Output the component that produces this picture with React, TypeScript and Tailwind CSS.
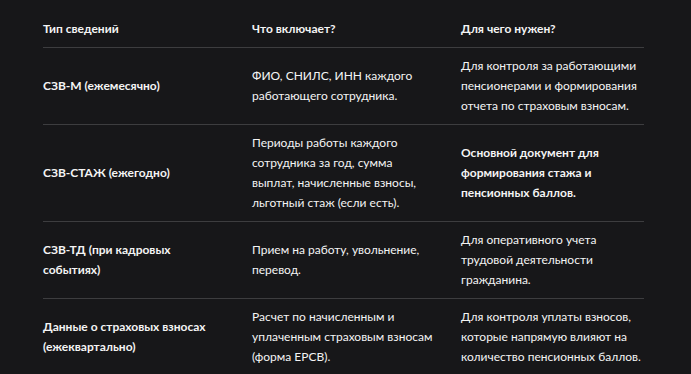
const rows = [
  {
    type: "СЗВ-М (ежемесячно)",
    what: "ФИО, СНИЛС, ИНН каждого работающего сотрудника.",
    why: "Для контроля за работающими пенсионерами и формирования отчета по страховым взносам.",
    strong: false,
  },
  {
    type: "СЗВ-СТАЖ (ежегодно)",
    what: "Периоды работы каждого сотрудника за год, сумма выплат, начисленные взносы, льготный стаж (если есть).",
    why: "Основной документ для формирования стажа и пенсионных баллов.",
    strong: true,
  },
  {
    type: "СЗВ-ТД (при кадровых событиях)",
    what: "Прием на работу, увольнение, перевод.",
    why: "Для оперативного учета трудовой деятельности гражданина.",
    strong: false,
  },
  {
    type: "Данные о страховых взносах (ежеквартально)",
    what: "Расчет по начисленным и уплаченным страховым взносам (форма ЕРСВ).",
    why: "Для контроля уплаты взносов, которые напрямую влияют на количество пенсионных баллов.",
    strong: false,
  },
];

export default function App() {
  return (
    <div
      className="min-h-screen bg-[#171719] pl-[43px] pt-[11px] text-[12px] leading-5 text-[#f4f4f4]"
      style={{ fontFamily: 'Lato, "Noto Sans", sans-serif' }}
    >
      <table className="w-[601px] table-fixed border-collapse text-left">
        <colgroup>
          <col className="w-[209px]" />
          <col className="w-[209px]" />
          <col className="w-[183px]" />
        </colgroup>
        <thead>
          <tr className="border-b border-[#3d3d3f]">
            <th className="py-2 pr-6 font-bold">Тип сведений</th>
            <th className="py-2 pr-6 font-bold">Что включает?</th>
            <th className="py-2 font-bold">Для чего нужен?</th>
          </tr>
        </thead>
        <tbody>
          {rows.map((r, i) => (
            <tr
              key={r.type}
              className={i < rows.length - 1 ? "border-b border-[#3d3d3f]" : ""}
            >
              <td className="py-2 pr-6 font-bold">{r.type}</td>
              <td className="py-2 pr-6">{r.what}</td>
              <td className={`py-2 ${r.strong ? "font-bold" : ""}`}>{r.why}</td>
            </tr>
          ))}
        </tbody>
      </table>
    </div>
  );
}
